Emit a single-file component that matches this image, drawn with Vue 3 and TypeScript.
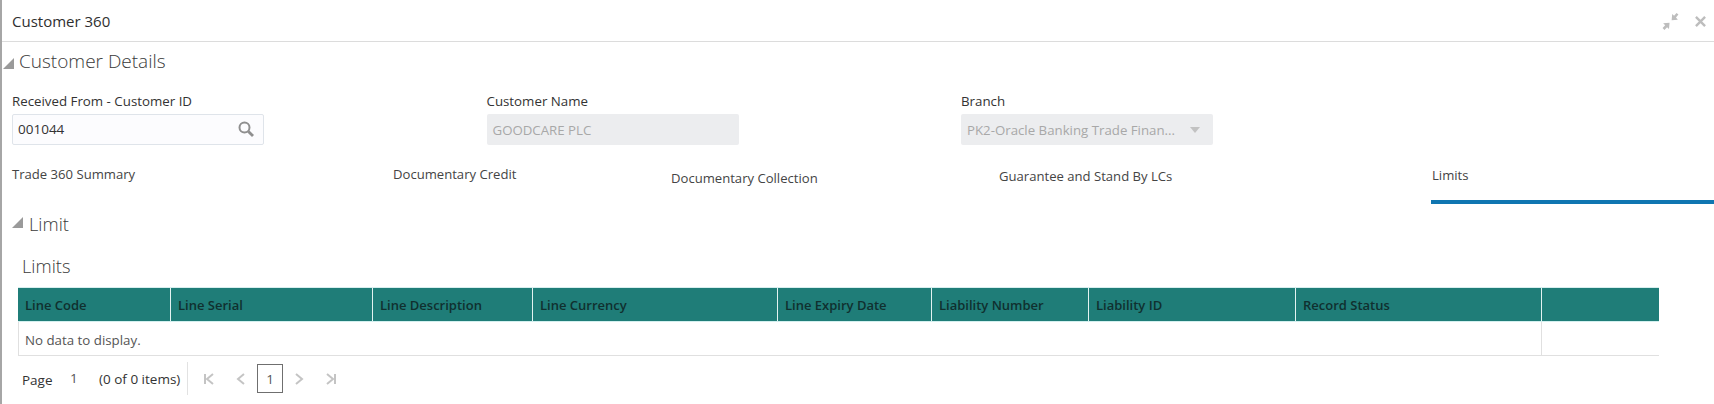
<script setup lang="ts">
const columns: { label: string; width: number }[] = [
  { label: 'Line Code', width: 153 },
  { label: 'Line Serial', width: 202 },
  { label: 'Line Description', width: 160 },
  { label: 'Line Currency', width: 245 },
  { label: 'Line Expiry Date', width: 154 },
  { label: 'Liability Number', width: 157 },
  { label: 'Liability ID', width: 207 },
  { label: 'Record Status', width: 246 },
  { label: '', width: 117 },
]
</script>

<template>
  <div class="page">
    <header class="titlebar">
      <span class="title">Customer 360</span>
      <div class="win-icons">
        <svg width="17" height="17" viewBox="0 0 18 18" fill="#bdbdbd">
          <path d="M17.4 1.6 15.4 0 12.8 2.8 10.8 1 10.2 7.8 16.8 7.2 14.8 4.8Z" />
          <path d="M.6 16 2.6 18 5.4 15 7.4 17 8 10.2 1.2 10.8 3.4 13Z" />
        </svg>
        <svg width="11" height="11" viewBox="0 0 12 12" stroke="#bdbdbd" stroke-width="2.6" fill="none">
          <path d="M1 1 11 11M11 1 1 11" />
        </svg>
      </div>
    </header>

    <section class="details">
      <div class="sec-head">
        <svg class="tri" width="11" height="11" viewBox="0 0 11 11"><path d="M11 0V11H0Z" fill="#9a9a9a" /></svg>
        <h2>Customer Details</h2>
      </div>
      <div class="fields">
        <div class="field">
          <label>Received From - Customer ID</label>
          <div class="input editable">
            <span>001044</span>
            <svg width="16" height="16" viewBox="0 0 16 16" fill="none" stroke="#8f8f8f">
              <circle cx="6.5" cy="6.5" r="5" stroke-width="2" />
              <path d="M10.4 10.4 15 15" stroke-width="2.8" />
            </svg>
          </div>
        </div>
        <div class="field">
          <label>Customer Name</label>
          <div class="input disabled"><span>GOODCARE PLC</span></div>
        </div>
        <div class="field">
          <label>Branch</label>
          <div class="input disabled select">
            <span>PK2-Oracle Banking Trade Finan...</span>
            <i class="caret"></i>
          </div>
        </div>
      </div>
    </section>

    <nav class="tabs">
      <div class="tab t1">Trade 360 Summary</div>
      <div class="tab t2">Documentary Credit</div>
      <div class="tab t3">Documentary Collection</div>
      <div class="tab t4">Guarantee and Stand By LCs</div>
      <div class="tab t5">Limits</div>
    </nav>

    <section class="limit">
      <div class="sec-head inner">
        <svg class="tri" width="11" height="11" viewBox="0 0 11 11"><path d="M11 0V11H0Z" fill="#9a9a9a" /></svg>
        <h2 class="small">Limit</h2>
      </div>
      <h3>Limits</h3>
      <div class="table">
        <div class="row head">
          <div v-for="c in columns" :key="c.label" class="th" :style="{ width: c.width + 'px' }">{{ c.label }}</div>
        </div>
        <div class="row body">
          <div class="empty">No data to display.</div>
          <div class="filler"></div>
        </div>
      </div>
      <div class="pager">
        <span class="p-label">Page</span>
        <span class="p-num">1</span>
        <span class="p-count">(0 of 0 items)</span>
        <i class="p-sep"></i>
        <div class="p-nav">
          <svg width="12" height="14" viewBox="0 0 12 14" fill="none" stroke="#c4c4c4" stroke-width="2"><path d="M2 2V12M10 2 4 7 10 12" /></svg>
          <svg class="p-gap" width="12" height="14" viewBox="0 0 12 14" fill="none" stroke="#c4c4c4" stroke-width="2"><path d="M9 2 3 7 9 12" /></svg>
          <span class="p-box">1</span>
          <svg class="p-gap2" width="12" height="14" viewBox="0 0 12 14" fill="none" stroke="#c4c4c4" stroke-width="2"><path d="M3 2 9 7 3 12" /></svg>
          <svg class="p-gap" width="12" height="14" viewBox="0 0 12 14" fill="none" stroke="#c4c4c4" stroke-width="2"><path d="M10 2V12M2 2 8 7 2 12" /></svg>
        </div>
      </div>
    </section>
  </div>
</template>

<style>
html, body { margin: 0; background: #fff; overflow: hidden; }
</style>

<style scoped>
.page {
  width: 1714px;
  height: 404px;
  box-sizing: border-box;
  border-left: 2px solid #a6a6a6;
  font-family: "Open Sans", "Liberation Sans", sans-serif;
  color: #333;
  overflow: hidden;
  background: #fff;
}
.titlebar {
  border-bottom: 1px solid #dcdcdc;
  display: flex;
  align-items: center;
  justify-content: space-between;
  padding: 1px 8px 0 10px;
  box-sizing: content-box;
  height: 40px;
}
.title { font-size: 15px; color: #2f2f2f; }
.win-icons { display: flex; align-items: center; gap: 16px; }
.sec-head { display: flex; align-items: center; gap: 5px; height: 40px; padding-left: 1px; }
.sec-head h2 { margin: -2px 0 0; font-size: 19px; font-weight: 300; color: #3a3a3a; }
.sec-head .tri { margin-top: 2px; }
.fields { display: flex; padding-left: 10px; margin-top: 10px; }
.field { width: 474.5px; }
label { display: block; font-size: 13.3px; line-height: 18px; color: #333; margin-bottom: 4px; }
.input {
  height: 31px;
  box-sizing: border-box;
  width: 252px;
  border-radius: 2px;
  font-size: 13.25px;
  display: flex;
  align-items: center;
  padding: 0 6px;
  justify-content: space-between;
}
.editable { border: 1px solid #dfe4ea; background: #fcfcfe; color: #333; padding: 0 9px 2px 5px; font-size: 13.5px; }
.disabled { background: #ecedef; color: #a8a8a8; }
.select { padding-right: 13px; }
.caret {
  width: 0; height: 0;
  border-left: 5px solid transparent;
  border-right: 5px solid transparent;
  border-top: 6px solid #c2c2c2;
}
.tabs { display: flex; height: 59px; font-size: 13.1px; color: #444; }
.tab { box-sizing: border-box; height: 59px; line-height: 18px; padding-left: 10px; }
.t1 { width: 381px; padding-top: 20px; }
.t2 { width: 278px; padding-top: 20px; }
.t3 { width: 328px; padding-top: 24px; }
.t4 { width: 442px; padding-top: 22px; }
.t5 { width: 283px; padding-left: 1px; padding-top: 21px; border-bottom: 4px solid #0f76b1; }
.limit { padding-left: 10px; }
.inner { height: 36px; margin-top: 2px; gap: 6px; padding-left: 0; }
.sec-head.inner .tri { margin-top: -4px; }
.sec-head h2.small { margin: -2px 0 0; font-size: 18.3px; }
h3 { margin: 10px 0 7px 10px; font-size: 18.3px; font-weight: 300; line-height: 28px; color: #3a3a3a; }
.table { margin-left: 6px; width: 1641px; }
.row { display: flex; }
.head { height: 35px; background: #1f7d78; border-bottom: 1px solid #d3f0ef; border-top: 1px solid #d7eeee; box-sizing: border-box; }
.th {
  box-sizing: border-box;
  font-size: 13px;
  font-weight: 600;
  line-height: 34px;
  color: #10302f;
  padding-left: 7px;
  border-right: 1px solid #e4f2f1;
  white-space: nowrap;
}
.th:last-child { border-right: none; }
.body { height: 34px; border-bottom: 1px solid #e0e0e0; border-left: 1px solid #e0e0e0; box-sizing: border-box; }
.empty { width: 1523px; box-sizing: border-box; border-right: 1px solid #e0e0e0; padding: 1px 0 0 6px; line-height: 34px; font-size: 13.3px; color: #555; }
.filler { flex: 1; }
.pager { display: flex; align-items: center; height: 39px; margin: 3px 0 0 10px; font-size: 13.5px; color: #333; }
.p-label { width: 48px; padding-top: 2px; }
.p-num { width: 29px; color: #555; padding-bottom: 2px; box-sizing: border-box; }
.p-count { width: 88px; padding-top: 1px; white-space: nowrap; }
.p-sep { width: 1px; height: 33px; background: #e2e2e2; margin-right: 15px; }
.p-nav { display: flex; align-items: center; }
.p-gap { margin-left: 20px; }
.p-gap2 { margin-left: 10px; }
.p-box {
  box-sizing: border-box;
  width: 26px; height: 29px;
  border: 1px solid #6f6f6f;
  margin-left: 10px;
  text-align: center;
  line-height: 29px;
  color: #555;
}
</style>
